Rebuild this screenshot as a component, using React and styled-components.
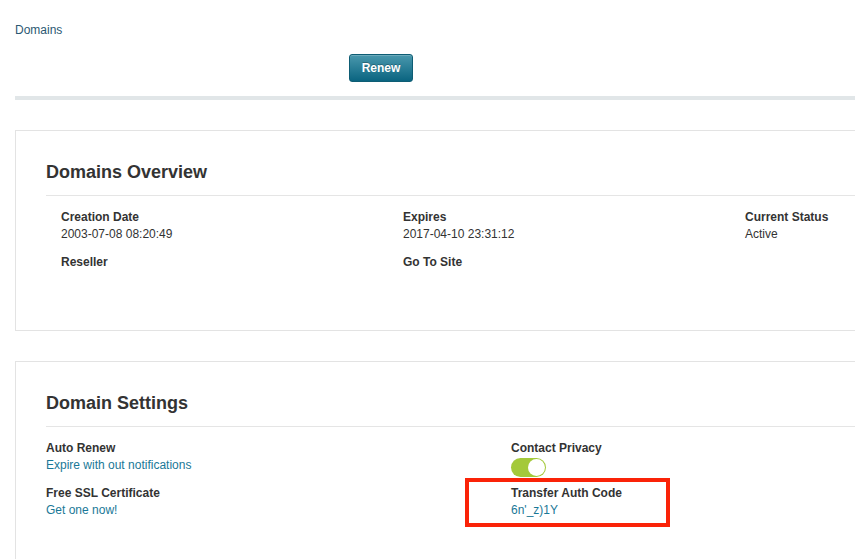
import React from "react";
import styled, { createGlobalStyle } from "styled-components";

const Global = createGlobalStyle`
  html, body { margin: 0; padding: 0; background: #fff; overflow: hidden; }
  body { font-family: "Liberation Sans", Arial, Helvetica, sans-serif; color: #333; font-size: 12px; }
`;

const Page = styled.div`
  width: 1120px;
  padding: 23px 0 0 15px;
`;

const Crumb = styled.div`
  font-size: 12px;
  line-height: 15px;
  color: #2b5872;
`;

const Toolbar = styled.div`
  display: flex;
  padding: 16px 0 14px 334px;
  border-bottom: 4px solid #e1e6e8;
  margin-bottom: 30px;
`;

const Button = styled.button`
  width: 64px;
  height: 28px;
  border: 1px solid #0e5d74;
  border-radius: 3px;
  background: linear-gradient(#4a98ad, #0a6480);
  color: #fff;
  font-family: inherit;
  font-weight: bold;
  font-size: 12px;
  text-shadow: 0 -1px 0 rgba(0,0,0,0.25);
  padding: 0;
  box-shadow: inset 0 1px 0 rgba(255,255,255,0.2);
`;

const Card = styled.section`
  border: 1px solid #e3e3e3;
  padding: 31px 30px ${p => p.$pb || 30}px;
  margin-bottom: 30px;
`;

const Heading = styled.h2`
  margin: 0;
  font-size: 18px;
  line-height: 20px;
  font-weight: bold;
  color: #333;
  padding-bottom: 13px;
  border-bottom: 1px solid #e5e5e5;
`;

const Grid = styled.div`
  display: grid;
  grid-template-columns: repeat(${p => p.$cols}, ${p => p.$w}px);
  padding: 13px ${p => p.$inset || 0}px 0;
`;

const Item = styled.div`
  position: relative;
  margin-bottom: ${p => p.$mb ?? 11}px;
`;

const Label = styled.div`
  font-weight: bold;
  font-size: 12px;
  line-height: 17px;
  color: #333;
`;

const Value = styled.div`
  font-size: 12px;
  line-height: 17px;
  min-height: 17px;
  color: ${p => (p.$link ? "#1a7897" : "#333")};
`;

const Toggle = styled.div`
  width: 35px;
  height: 19px;
  border-radius: 10px;
  background: #a4c93a;
  position: relative;
  margin-top: 1px;
  &::after {
    content: "";
    position: absolute;
    right: 1px;
    top: 1px;
    width: 17px;
    height: 17px;
    border-radius: 50%;
    background: #fff;
  }
`;

const Highlight = styled.div`
  position: absolute;
  left: -46px;
  top: -7px;
  width: 197px;
  height: 41px;
  border: 4px solid #fa2308;
  pointer-events: none;
`;

export default function App() {
  return (
    <>
      <Global />
      <Page>
        <Crumb>Domains</Crumb>
        <Toolbar>
          <Button>Renew</Button>
        </Toolbar>

        <Card $pb={31}>
          <Heading>Domains Overview</Heading>
          <Grid $cols={3} $w={342} $inset={15}>
            <div>
              <Item>
                <Label>Creation Date</Label>
                <Value>2003-07-08 08:20:49</Value>
              </Item>
              <Item>
                <Label>Reseller</Label>
                <Value></Value>
              </Item>
            </div>
            <div>
              <Item>
                <Label>Expires</Label>
                <Value>2017-04-10 23:31:12</Value>
              </Item>
              <Item>
                <Label>Go To Site</Label>
                <Value></Value>
              </Item>
            </div>
            <div>
              <Item>
                <Label>Current Status</Label>
                <Value>Active</Value>
              </Item>
            </div>
          </Grid>
        </Card>

        <Card>
          <Heading>Domain Settings</Heading>
          <Grid $cols={2} $w={465}>
            <div>
              <Item>
                <Label>Auto Renew</Label>
                <Value $link>Expire with out notifications</Value>
              </Item>
              <Item>
                <Label>Free SSL Certificate</Label>
                <Value $link>Get one now!</Value>
              </Item>
            </div>
            <div>
              <Item $mb={8}>
                <Label>Contact Privacy</Label>
                <Toggle />
              </Item>
              <Item>
                <Label>Transfer Auth Code</Label>
                <Value $link>6n'_z)1Y</Value>
                <Highlight />
              </Item>
            </div>
          </Grid>
        </Card>
      </Page>
    </>
  );
}
